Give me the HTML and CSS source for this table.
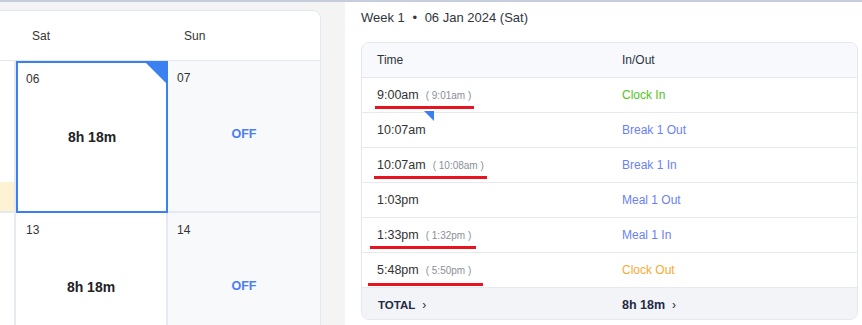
FILE: index.html
```html
<!DOCTYPE html>
<html lang="en">
<head>
<meta charset="utf-8">
<title>Timesheet</title>
<link rel="stylesheet" href="styles.css">
</head>
<body>
<div class="topbar"></div>
<div class="page">
  <div class="left">
    <div class="cal">
      <div class="cal-head">
        <div class="hcell"></div>
        <div class="hcell">Sat</div>
        <div class="hcell">Sun</div>
      </div>
      <div class="cal-body">
        <div class="cell"><span class="bar"></span></div>
        <div class="cell selected">
          <span class="num">06</span>
          <span class="val">8h 18m</span>
        </div>
        <div class="cell off">
          <span class="num">07</span>
          <span class="val offtxt">OFF</span>
        </div>
        <div class="cell"></div>
        <div class="cell">
          <span class="num">13</span>
          <span class="val">8h 18m</span>
        </div>
        <div class="cell off">
          <span class="num">14</span>
          <span class="val offtxt">OFF</span>
        </div>
      </div>
    </div>
  </div>
  <div class="right">
    <div class="title">Week 1 <span class="dot">•</span> 06 Jan 2024 (Sat)</div>
    <div class="table">
      <div class="row head">
        <div class="c1">Time</div>
        <div class="c2">In/Out</div>
      </div>
      <div class="row">
        <div class="c1"><span class="t mark m1">9:00am<span class="orig">( 9:01am )</span></span></div>
        <div class="c2 green">Clock In</div>
      </div>
      <div class="row">
        <div class="c1"><span class="t flag">10:07am</span></div>
        <div class="c2 blue">Break 1 Out</div>
      </div>
      <div class="row">
        <div class="c1"><span class="t mark m2">10:07am<span class="orig">( 10:08am )</span></span></div>
        <div class="c2 blue">Break 1 In</div>
      </div>
      <div class="row">
        <div class="c1"><span class="t">1:03pm</span></div>
        <div class="c2 blue">Meal 1 Out</div>
      </div>
      <div class="row">
        <div class="c1"><span class="t mark m3">1:33pm<span class="orig">( 1:32pm )</span></span></div>
        <div class="c2 blue">Meal 1 In</div>
      </div>
      <div class="row">
        <div class="c1"><span class="t mark m4">5:48pm<span class="orig">( 5:50pm )</span></span></div>
        <div class="c2 orange">Clock Out</div>
      </div>
      <div class="row total">
        <div class="c1">TOTAL<span class="chev">›</span></div>
        <div class="c2">8h 18m<span class="chev">›</span></div>
      </div>
    </div>
  </div>
</div>
</body>
</html>
```
FILE: styles.css
```css
* { box-sizing: border-box; }
html, body { margin: 0; padding: 0; }
body {
  width: 862px;
  height: 325px;
  overflow: hidden;
  background: #f4f4f5;
  font-family: "Liberation Sans", Arial, sans-serif;
  color: #333;
}
.topbar { height: 2px; background: #c6cede; }
.page { display: flex; height: 323px; }
.left {
  width: 345px;
  overflow: hidden;
  padding-top: 8px;
}
.cal {
  margin-left: -137px;
  width: 458px;
  background: #fff;
  border: 1px solid #e3e7ee;
  border-radius: 0 8px 0 0;
  height: 330px;
}
.cal-head {
  display: grid;
  grid-template-columns: 152px 152px 152px;
  height: 50px;
  border-bottom: 1px solid #e3e7ee;
}
.hcell {
  font-size: 12px;
  padding-left: 16px;
  line-height: 51px;
  color: #333;
}
.cal-body {
  display: grid;
  grid-template-columns: 152px 152px 152px;
  grid-auto-rows: 152px;
}
.cell {
  position: relative;
  border-right: 2px solid #e6eaf0;
  border-bottom: 2px solid #e6eaf0;
  display: flex;
  flex-direction: column;
  align-items: center;
  padding: 10px 10px 0 10px;
}
.cell:nth-child(3n) { border-right: none; padding: 10px 9px 0 9px; }
.cell.off { background: #f8f9fb; }
.cell .num {
  align-self: flex-start;
  font-size: 12px;
  color: #333;
  line-height: 14px;
}
.cell .val {
  margin-top: 42px;
  font-size: 14px;
  font-weight: 700;
  color: #222;
}
.cell .offtxt { color: #4b7df0; font-size: 12.5px; }
.cell .bar {
  position: absolute;
  left: 0; right: 0;
  bottom: 0;
  height: 29px;
  background: #fdf2d4;
}
.cell.selected {
  border: 2px solid #3a80f0;
  padding: 9px 8px 0 8px;
}
.cell.selected .val { margin-top: 43px; }
.cell.selected::after {
  content: "";
  position: absolute;
  top: 0; right: 0;
  border-style: solid;
  border-width: 0 20px 20px 0;
  border-color: transparent #3a80f0 transparent transparent;
}
.right {
  flex: 1;
  background: #fff;
  padding: 6px 4px 0 16px;
}
.title {
  font-size: 13px;
  line-height: 20px;
  color: #2f3640;
  margin-bottom: 14px;
}
.title .dot { margin: 0 4px; }
.table {
  width: 497px;
  border: 1px solid #e3e7ee;
  border-radius: 8px;
  overflow: hidden;
}
.row {
  display: grid;
  grid-template-columns: 245px 1fr;
  height: 35px;
  align-items: center;
  border-bottom: 1px solid #e6e9ef;
  font-size: 12px;
}
.row .c1 { padding-left: 15px; }
.row .c2 { padding-left: 15px; }
.row.head { background: #f7f9fc; color: #2c3440; font-weight: 500; }
.row.total {
  height: 31px;
  padding-top: 3px;
  border-bottom: none;
  background: #f2f4f8;
  font-weight: 700;
  color: #1f2a44;
}
.row.total .c1 { font-size: 11.5px; padding-left: 16px; }
.row.total .c2 { font-size: 12.5px; }
.chev { font-weight: 400; margin-left: 7px; font-size: 12px; }
.t { position: relative; color: #333; font-size: 12.5px; }
.orig { font-size: 10px; color: #8a8f98; margin-left: 7px; }
.green { color: #52c41a; }
.blue { color: #6b7ff5; }
.orange { color: #f6aa33; }
.mark::after {
  content: "";
  position: absolute;
  height: 3px;
  background: #e8131f;
  bottom: -7px;
}
.m1::after { left: -2px; right: -3px; }
.m2::after { left: -3px; right: -3px; }
.m3::after { left: -7px; right: -5px; }
.m4::after { left: -9px; right: -12px; bottom: -9px; }
.flag::after {
  content: "";
  position: absolute;
  top: -12px;
  right: -8px;
  border-style: solid;
  border-width: 0 10px 10px 0;
  border-color: transparent #3a80f0 transparent transparent;
}
```
